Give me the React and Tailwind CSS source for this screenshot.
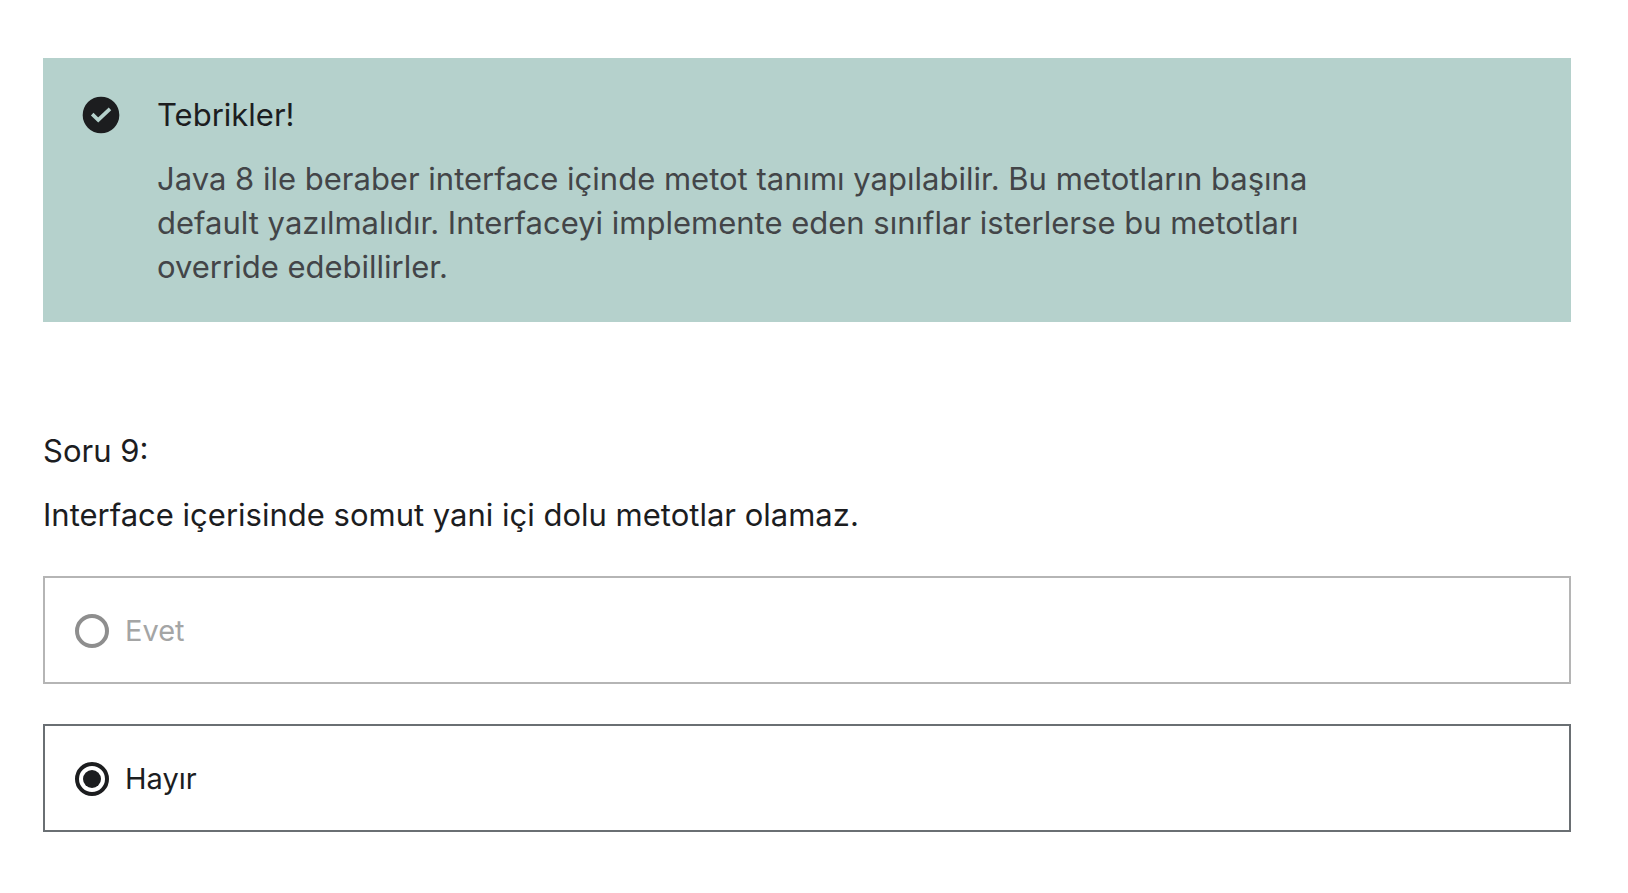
import { useState } from "react";

const options = [
  { id: "evet", label: "Evet", disabled: true },
  { id: "hayir", label: "Hayır", disabled: false },
];

function CheckBadge() {
  return (
    <svg className="size-11 shrink-0" viewBox="0 0 24 24" aria-hidden="true">
      <circle cx="12" cy="12" r="10" fill="#1c1d1f" />
      <path
        d="M7.2 11.5l3.3 3.2L16.9 8.7"
        fill="none"
        stroke="#b5d1cc"
        strokeWidth="2"
      />
    </svg>
  );
}

function Feedback() {
  return (
    <section className="flex gap-[34px] bg-[#b5d1cc] px-9 pt-[35px] pb-[33px]">
      <CheckBadge />
      <div className="max-w-[1200px]">
        <h2>Tebrikler!</h2>
        <p className="mt-5 text-[#434548]">
          Java 8 ile beraber interface içinde metot tanımı yapılabilir. Bu metotların başına
          default yazılmalıdır. Interfaceyi implemente eden sınıflar isterlerse bu metotları
          override edebillirler.
        </p>
      </div>
    </section>
  );
}

export default function App() {
  const [answer, setAnswer] = useState("hayir");

  return (
    <main className="min-h-screen bg-white pt-[58px] pr-[57px] pb-[60px] pl-[43px] font-['Inter',sans-serif] text-[31px] leading-[44px] text-[#1c1d1f]">
      <Feedback />
      <form className="mt-[107px]">
        <h3>Soru 9:</h3>
        <p id="question" className="mt-5">
          Interface içerisinde somut yani içi dolu metotlar olamaz.
        </p>
        <div role="radiogroup" aria-labelledby="question" className="mt-[39px] flex flex-col gap-10">
          {options.map(({ id, label, disabled }) => (
            <label
              key={id}
              htmlFor={id}
              className="flex items-center gap-4 border-2 border-[#6a6f73] px-[30px] pt-[31px] pb-[29px] text-[29px] has-disabled:border-[#b5b5b5] has-disabled:text-[#a4a5a5]"
            >
              <input
                type="radio"
                id={id}
                name="answer"
                value={id}
                disabled={disabled}
                checked={answer === id}
                onChange={() => setAnswer(id)}
                className="grid size-[34px] shrink-0 appearance-none place-items-center rounded-full border-4 border-[#1c1d1f] before:size-[18px] before:rounded-full checked:before:bg-[#1c1d1f] disabled:border-[#8e8e8e]"
              />
              {label}
            </label>
          ))}
        </div>
      </form>
    </main>
  );
}
